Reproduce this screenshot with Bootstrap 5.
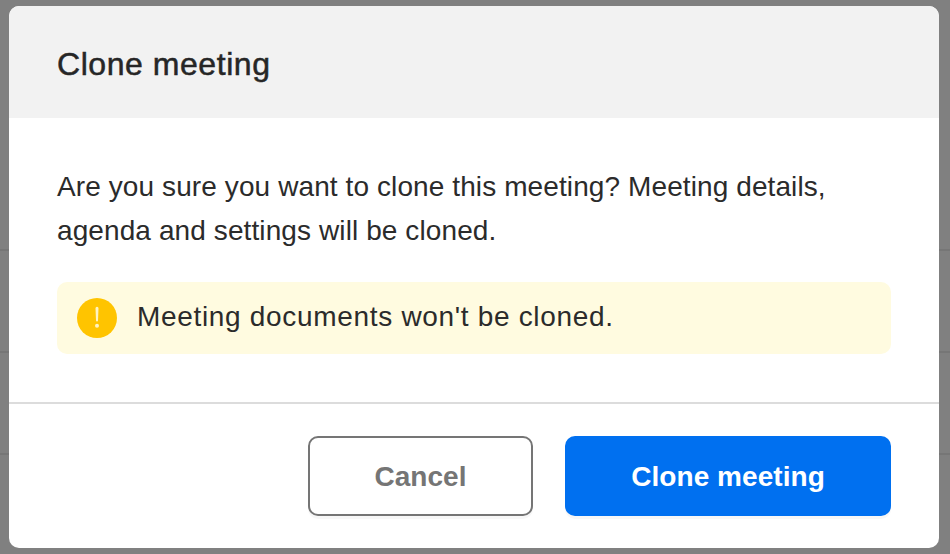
<!DOCTYPE html>
<html lang="en">
<head>
    <meta charset="UTF-8">
    <meta name="viewport" content="width=device-width, initial-scale=1.0">
    <title>Clone meeting</title>
    <link href="https://cdn.jsdelivr.net/npm/bootstrap@5.3.0/dist/css/bootstrap.min.css" rel="stylesheet">
    <style>
        html, body { height: 554px; overflow: hidden; }
        body { background: #808080; font-family: "Liberation Sans", Arial, sans-serif; color: #2b2b2b; }
        .page-rows { height: 554px; color: #3a3a3a; }
        .page-row { height: 102px; border-bottom: 2px solid #767676; font-size: 28px; }
        .page-row-first { height: 251px; padding-top: 172px; line-height: 54px; }
        .page-row-first span { display: block; margin-left: -14px; }
        .clone-modal { position: absolute; left: 9px; top: 6px; width: 930px; height: 542px; background: #fff; border-radius: 10px; overflow: hidden; }
        .clone-head { height: 112px; background: #f2f2f2; padding-left: 48px; padding-top: 4px; }
        .clone-head h5 { font-size: 32px; line-height: 1; font-weight: 400; letter-spacing: .55px; -webkit-text-stroke: .5px #262626; margin: 0; color: #262626; }
        .clone-body { height: 286px; padding: 47px 48px 0; border-bottom: 2px solid #dcdcdc; }
        .clone-body p { font-size: 28px; line-height: 44px; letter-spacing: .1px; margin: 0 0 29px; }
        .clone-note { height: 72px; background: #fffbe0; border-radius: 10px; padding-left: 20px; padding-bottom: 3px; gap: 20px; font-size: 28px; letter-spacing: .68px; }
        .note-icon { width: 40px; height: 40px; flex: none; margin-top: 3px; }
        .clone-foot { padding: 32px 48px 0; gap: 32px; }
        .clone-btn { height: 80px; font-size: 28px; font-weight: 700; border-radius: 10px; padding: 2px 0 0; letter-spacing: .05px; box-shadow: 0 3px 0 #f7f7f7; }
        .clone-cancel { width: 225px; border: 2px solid #757575; color: #757575; background: #fff; }
        .clone-ok { width: 326px; border: 0; color: #fff; background: #0070f0; }
    </style>
</head>
<body>
    <!-- page behind the dialog, mostly hidden -->
    <div class="page-rows">
        <div class="page-row page-row-first"><span>t</span></div>
        <div class="page-row"></div>
        <div class="page-row"></div>
    </div>

    <div class="clone-modal d-flex flex-column">
        <div class="clone-head d-flex align-items-center">
            <h5>Clone meeting</h5>
        </div>
        <div class="clone-body">
            <p>Are you sure you want to clone this meeting? Meeting details,<br>agenda and settings will be cloned.</p>
            <div class="clone-note d-flex align-items-center">
                <svg class="note-icon" viewBox="0 0 40 40">
                    <circle cx="20" cy="20" r="20" fill="#ffc400"/>
                    <path d="M18.5 10.2a1.5 1.5 0 0 1 3 0l-.5 12.3a1 1 0 0 1-2 0z" fill="#fff3c4"/>
                    <circle cx="20" cy="27.7" r="2" fill="#fff3c4"/>
                </svg>
                <span>Meeting documents won't be cloned.</span>
            </div>
        </div>
        <div class="clone-foot d-flex justify-content-end">
            <button type="button" class="btn clone-btn clone-cancel">Cancel</button>
            <button type="button" class="btn clone-btn clone-ok">Clone meeting</button>
        </div>
    </div>

    <script src="https://cdn.jsdelivr.net/npm/bootstrap@5.3.0/dist/js/bootstrap.bundle.min.js"></script>
</body>
</html>
